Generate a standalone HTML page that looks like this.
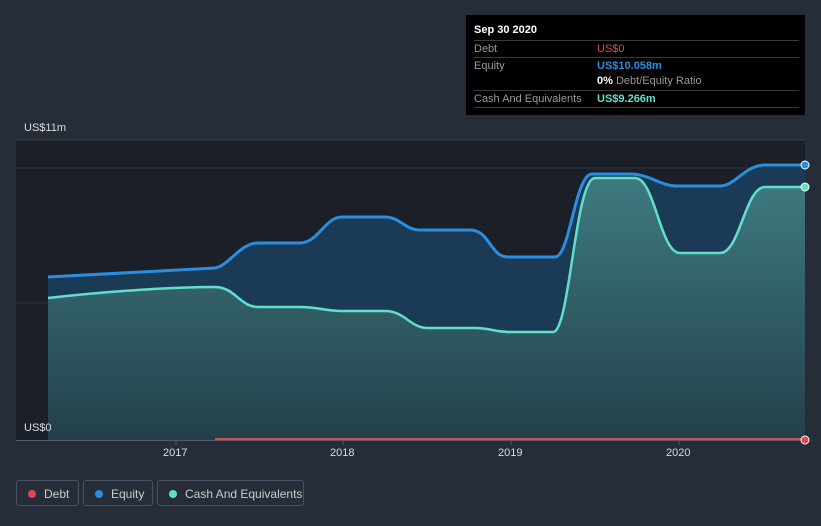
<!DOCTYPE html>
<html><head><meta charset="utf-8"><style>
body{margin:0;width:821px;height:526px;background:#262c38;overflow:hidden;font-family:"Liberation Sans",sans-serif;position:relative}
.tt{position:absolute;left:466px;top:15px;width:339px;height:100px;background:#000;color:#fff;font-size:11px}
.tt .h{position:absolute;left:8px;top:9px;font-weight:bold}
.row{position:absolute;left:8px;width:325px;border-top:1px solid #3a3a3a;height:16px;line-height:16px;color:#999}
.row span{position:absolute;left:123px}
.lg{position:absolute;top:480px;height:26px;border:1px solid #4a5160;border-radius:3px;color:#ccc;font-size:12px;line-height:26px;box-sizing:border-box}
.lg i{position:absolute;left:11px;top:9px;width:8px;height:8px;border-radius:50%}
.lg b{font-weight:normal;position:absolute;left:27px}
.ax{position:absolute;color:#ddd;font-size:11px}
</style></head><body>
<svg width="821" height="526" style="position:absolute;left:0;top:0">
<defs><linearGradient id="g" x1="0" y1="0" x2="0" y2="1"><stop offset="0" stop-color="#3e7a80"/><stop offset="1" stop-color="#23404a"/></linearGradient></defs>
<rect x="16" y="140" width="789" height="300" fill="#1b1f28"/>
<line x1="16" y1="140" x2="805" y2="140" fill="none" stroke="#3a404c"/>
<line x1="16" y1="168" x2="805" y2="168" stroke="#2c323c"/>
<line x1="16" y1="303" x2="805" y2="303" stroke="#2c323c"/>
<path d="M48,277 L215,268 C230,265 240,243 258,243 L300,243 C318,243 325,217 342,217 L385,217 C400,217 405,230 420,230 L470,230 C490,230 490,257 508,257 L555,257 C570,257 575,174 592,174 L630,174 C650,174 660,186 677,186 L720,186 C735,186 745,165 765,165 L805,165 L805,440 L48,440Z" fill="#1b3a55"/>
<path d="M48,298 C120,290 180,287 215,287 C235,287 240,307 258,307 L300,307 C318,307 325,311 342,311 L385,311 C405,311 410,328 428,328 L475,328 C490,328 495,332 510,332 L553,332 C570,332 575,178 595,178 L635,178 C655,178 660,253 680,253 L720,253 C740,253 745,187 765,187 L805,187 L805,440 L48,440Z" fill="url(#g)"/>
<path d="M48,277 L215,268 C230,265 240,243 258,243 L300,243 C318,243 325,217 342,217 L385,217 C400,217 405,230 420,230 L470,230 C490,230 490,257 508,257 L555,257 C570,257 575,174 592,174 L630,174 C650,174 660,186 677,186 L720,186 C735,186 745,165 765,165 L805,165" fill="none" stroke="#2a8ee0" stroke-width="3"/>
<path d="M48,298 C120,290 180,287 215,287 C235,287 240,307 258,307 L300,307 C318,307 325,311 342,311 L385,311 C405,311 410,328 428,328 L475,328 C490,328 495,332 510,332 L553,332 C570,332 575,178 595,178 L635,178 C655,178 660,253 680,253 L720,253 C740,253 745,187 765,187 L805,187" fill="none" stroke="#5fe0cc" stroke-width="2.5"/>
<line x1="215" y1="439" x2="805" y2="439" stroke="#d24b55" stroke-width="2"/>
<line x1="16" y1="440.5" x2="805" y2="440.5" stroke="#555b66"/>
<circle cx="805" cy="165" r="4" fill="#2a8ee0" stroke="#fff" stroke-width="1"/>
<circle cx="805" cy="187" r="4" fill="#5fe0cc" stroke="#fff" stroke-width="1"/>
<circle cx="805" cy="440" r="4" fill="#e64550" stroke="#fff" stroke-width="1"/>
<g stroke="#555b66"><line x1="176" y1="440" x2="176" y2="445"/><line x1="343" y1="440" x2="343" y2="445"/><line x1="511" y1="440" x2="511" y2="445"/><line x1="679" y1="440" x2="679" y2="445"/></g>
</svg>
<div class="ax" style="left:24px;top:122px">US$11m</div>
<div class="ax" style="left:24px;top:422px">US$0</div>
<div class="ax" style="left:163px;top:447px">2017</div>
<div class="ax" style="left:330px;top:447px">2018</div>
<div class="ax" style="left:498px;top:447px">2019</div>
<div class="ax" style="left:666px;top:447px">2020</div>
<div class="tt">
<div class="h">Sep 30 2020</div>
<div class="row" style="top:25px">Debt<span style="color:#e64550">US$0</span></div>
<div class="row" style="top:42px">Equity<span style="color:#2a8ee0;font-weight:bold">US$10.058m</span></div>
<div class="row" style="top:58px;border-top:none"><span style="color:#999"><b style="color:#fff">0%</b> Debt/Equity Ratio</span></div>
<div class="row" style="top:75px">Cash And Equivalents<span style="color:#5fe0cc;font-weight:bold">US$9.266m</span></div>
<div class="row" style="top:92px;height:0"></div>
</div>
<div class="lg" style="left:16px;width:63px"><i style="background:#e64550"></i><b>Debt</b></div>
<div class="lg" style="left:83px;width:70px"><i style="background:#2a8ee0"></i><b>Equity</b></div>
<div class="lg" style="left:157px;width:147px"><i style="background:#5fe0cc"></i><b>Cash And Equivalents</b></div>
</body></html>
